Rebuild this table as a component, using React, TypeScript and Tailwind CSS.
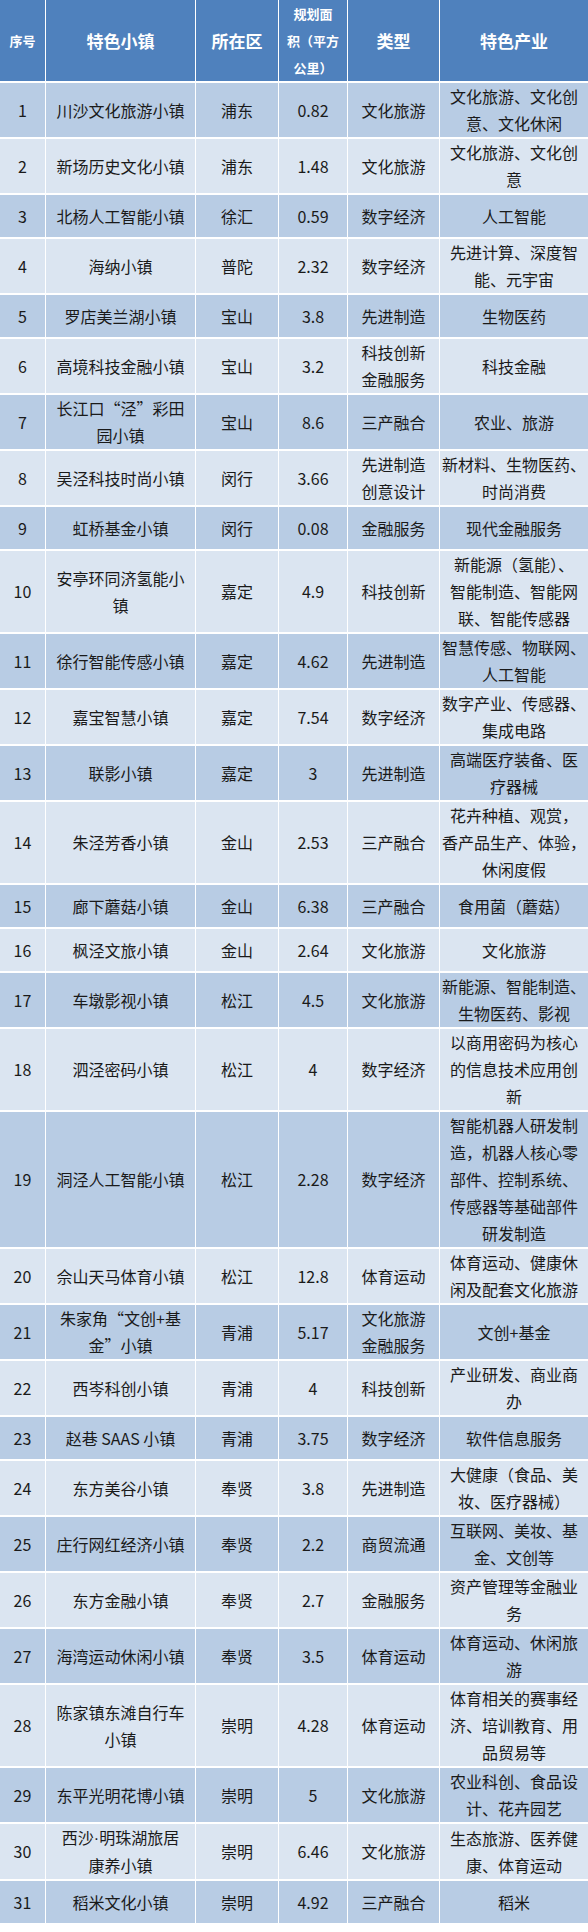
// App.tsx
// 上海特色小镇一览表 — Word "Medium Grid 3 Accent 1" style table
// ──────────────────────────────────────────────────────────────

type Row = [string, string, string, string, string, string];

// "\n" marks the line breaks as they appear in the source table
const ROWS: Row[] = [
  ["1", "川沙文化旅游小镇", "浦东", "0.82", "文化旅游", "文化旅游、文化创\n意、文化休闲"],
  ["2", "新场历史文化小镇", "浦东", "1.48", "文化旅游", "文化旅游、文化创\n意"],
  ["3", "北杨人工智能小镇", "徐汇", "0.59", "数字经济", "人工智能"],
  ["4", "海纳小镇", "普陀", "2.32", "数字经济", "先进计算、深度智\n能、元宇宙"],
  ["5", "罗店美兰湖小镇", "宝山", "3.8", "先进制造", "生物医药"],
  ["6", "高境科技金融小镇", "宝山", "3.2", "科技创新\n金融服务", "科技金融"],
  ["7", "长江口“泾”彩田\n园小镇", "宝山", "8.6", "三产融合", "农业、旅游"],
  ["8", "吴泾科技时尚小镇", "闵行", "3.66", "先进制造\n创意设计", "新材料、生物医药、\n时尚消费"],
  ["9", "虹桥基金小镇", "闵行", "0.08", "金融服务", "现代金融服务"],
  ["10", "安亭环同济氢能小\n镇", "嘉定", "4.9", "科技创新", "新能源（氢能）、\n智能制造、智能网\n联、智能传感器"],
  ["11", "徐行智能传感小镇", "嘉定", "4.62", "先进制造", "智慧传感、物联网、\n人工智能"],
  ["12", "嘉宝智慧小镇", "嘉定", "7.54", "数字经济", "数字产业、传感器、\n集成电路"],
  ["13", "联影小镇", "嘉定", "3", "先进制造", "高端医疗装备、医\n疗器械"],
  ["14", "朱泾芳香小镇", "金山", "2.53", "三产融合", "花卉种植、观赏，\n香产品生产、体验，\n休闲度假"],
  ["15", "廊下蘑菇小镇", "金山", "6.38", "三产融合", "食用菌（蘑菇）"],
  ["16", "枫泾文旅小镇", "金山", "2.64", "文化旅游", "文化旅游"],
  ["17", "车墩影视小镇", "松江", "4.5", "文化旅游", "新能源、智能制造、\n生物医药、影视"],
  ["18", "泗泾密码小镇", "松江", "4", "数字经济", "以商用密码为核心\n的信息技术应用创\n新"],
  ["19", "洞泾人工智能小镇", "松江", "2.28", "数字经济", "智能机器人研发制\n造，机器人核心零\n部件、控制系统、\n传感器等基础部件\n研发制造"],
  ["20", "佘山天马体育小镇", "松江", "12.8", "体育运动", "体育运动、健康休\n闲及配套文化旅游"],
  ["21", "朱家角“文创+基\n金”小镇", "青浦", "5.17", "文化旅游\n金融服务", "文创+基金"],
  ["22", "西岑科创小镇", "青浦", "4", "科技创新", "产业研发、商业商\n办"],
  ["23", "赵巷 SAAS 小镇", "青浦", "3.75", "数字经济", "软件信息服务"],
  ["24", "东方美谷小镇", "奉贤", "3.8", "先进制造", "大健康（食品、美\n妆、医疗器械）"],
  ["25", "庄行网红经济小镇", "奉贤", "2.2", "商贸流通", "互联网、美妆、基\n金、文创等"],
  ["26", "东方金融小镇", "奉贤", "2.7", "金融服务", "资产管理等金融业\n务"],
  ["27", "海湾运动休闲小镇", "奉贤", "3.5", "体育运动", "体育运动、休闲旅\n游"],
  ["28", "陈家镇东滩自行车\n小镇", "崇明", "4.28", "体育运动", "体育相关的赛事经\n济、培训教育、用\n品贸易等"],
  ["29", "东平光明花博小镇", "崇明", "5", "文化旅游", "农业科创、食品设\n计、花卉园艺"],
  ["30", "西沙·明珠湖旅居\n康养小镇", "崇明", "6.46", "文化旅游", "生态旅游、医养健\n康、体育运动"],
  ["31", "稻米文化小镇", "崇明", "4.92", "三产融合", "稻米"],
];

const GRID = "grid grid-cols-[45px_149px_82px_68px_91px_148px] gap-x-px";
const CELL = "flex items-center justify-center text-center whitespace-pre";

// the CJK font draws "·" full width; the source uses a narrow dot
function CellText({ text }: { text: string }) {
  if (!text.includes("·")) return <>{text}</>;
  const [a, b] = text.split("·");
  return (
    <span>
      {a}
      <span className="font-['Liberation_Sans',sans-serif]">·</span>
      {b}
    </span>
  );
}

export default function App() {
  return (
    <div className="w-[588px] bg-white font-['Microsoft_YaHei','Noto_Sans_CJK_SC',sans-serif]">
      <div className="flex flex-col gap-y-[2px]">
        {/* Header */}
        <div className={`${GRID} min-h-[81px] text-white font-bold`}>
          <div className={`${CELL} bg-[#4f81bd] text-[13px]`}>序号</div>
          <div className={`${CELL} bg-[#4f81bd] text-[17px]`}>特色小镇</div>
          <div className={`${CELL} bg-[#4f81bd] text-[17px]`}>所在区</div>
          <div className={`${CELL} bg-[#4f81bd] text-[13px] leading-[27px]`}>
            {"规划面\n积（平方\n公里）"}
          </div>
          <div className={`${CELL} bg-[#4f81bd] text-[17px]`}>类型</div>
          <div className={`${CELL} bg-[#4f81bd] text-[17px]`}>特色产业</div>
        </div>

        {/* Body */}
        {ROWS.map((row, i) => {
          const bg = i % 2 === 0 ? "bg-[#b8cce4]" : "bg-[#dbe5f1]";
          return (
            <div
              key={row[0]}
              className={`${GRID} min-h-[42px] text-[16px] leading-[27px] text-[#1a1a1a]`}
            >
              {row.map((text, j) => (
                <div key={j} className={`${CELL} ${bg} px-[2px]`}>
                  <CellText text={text} />
                </div>
              ))}
            </div>
          );
        })}
      </div>
    </div>
  );
}
